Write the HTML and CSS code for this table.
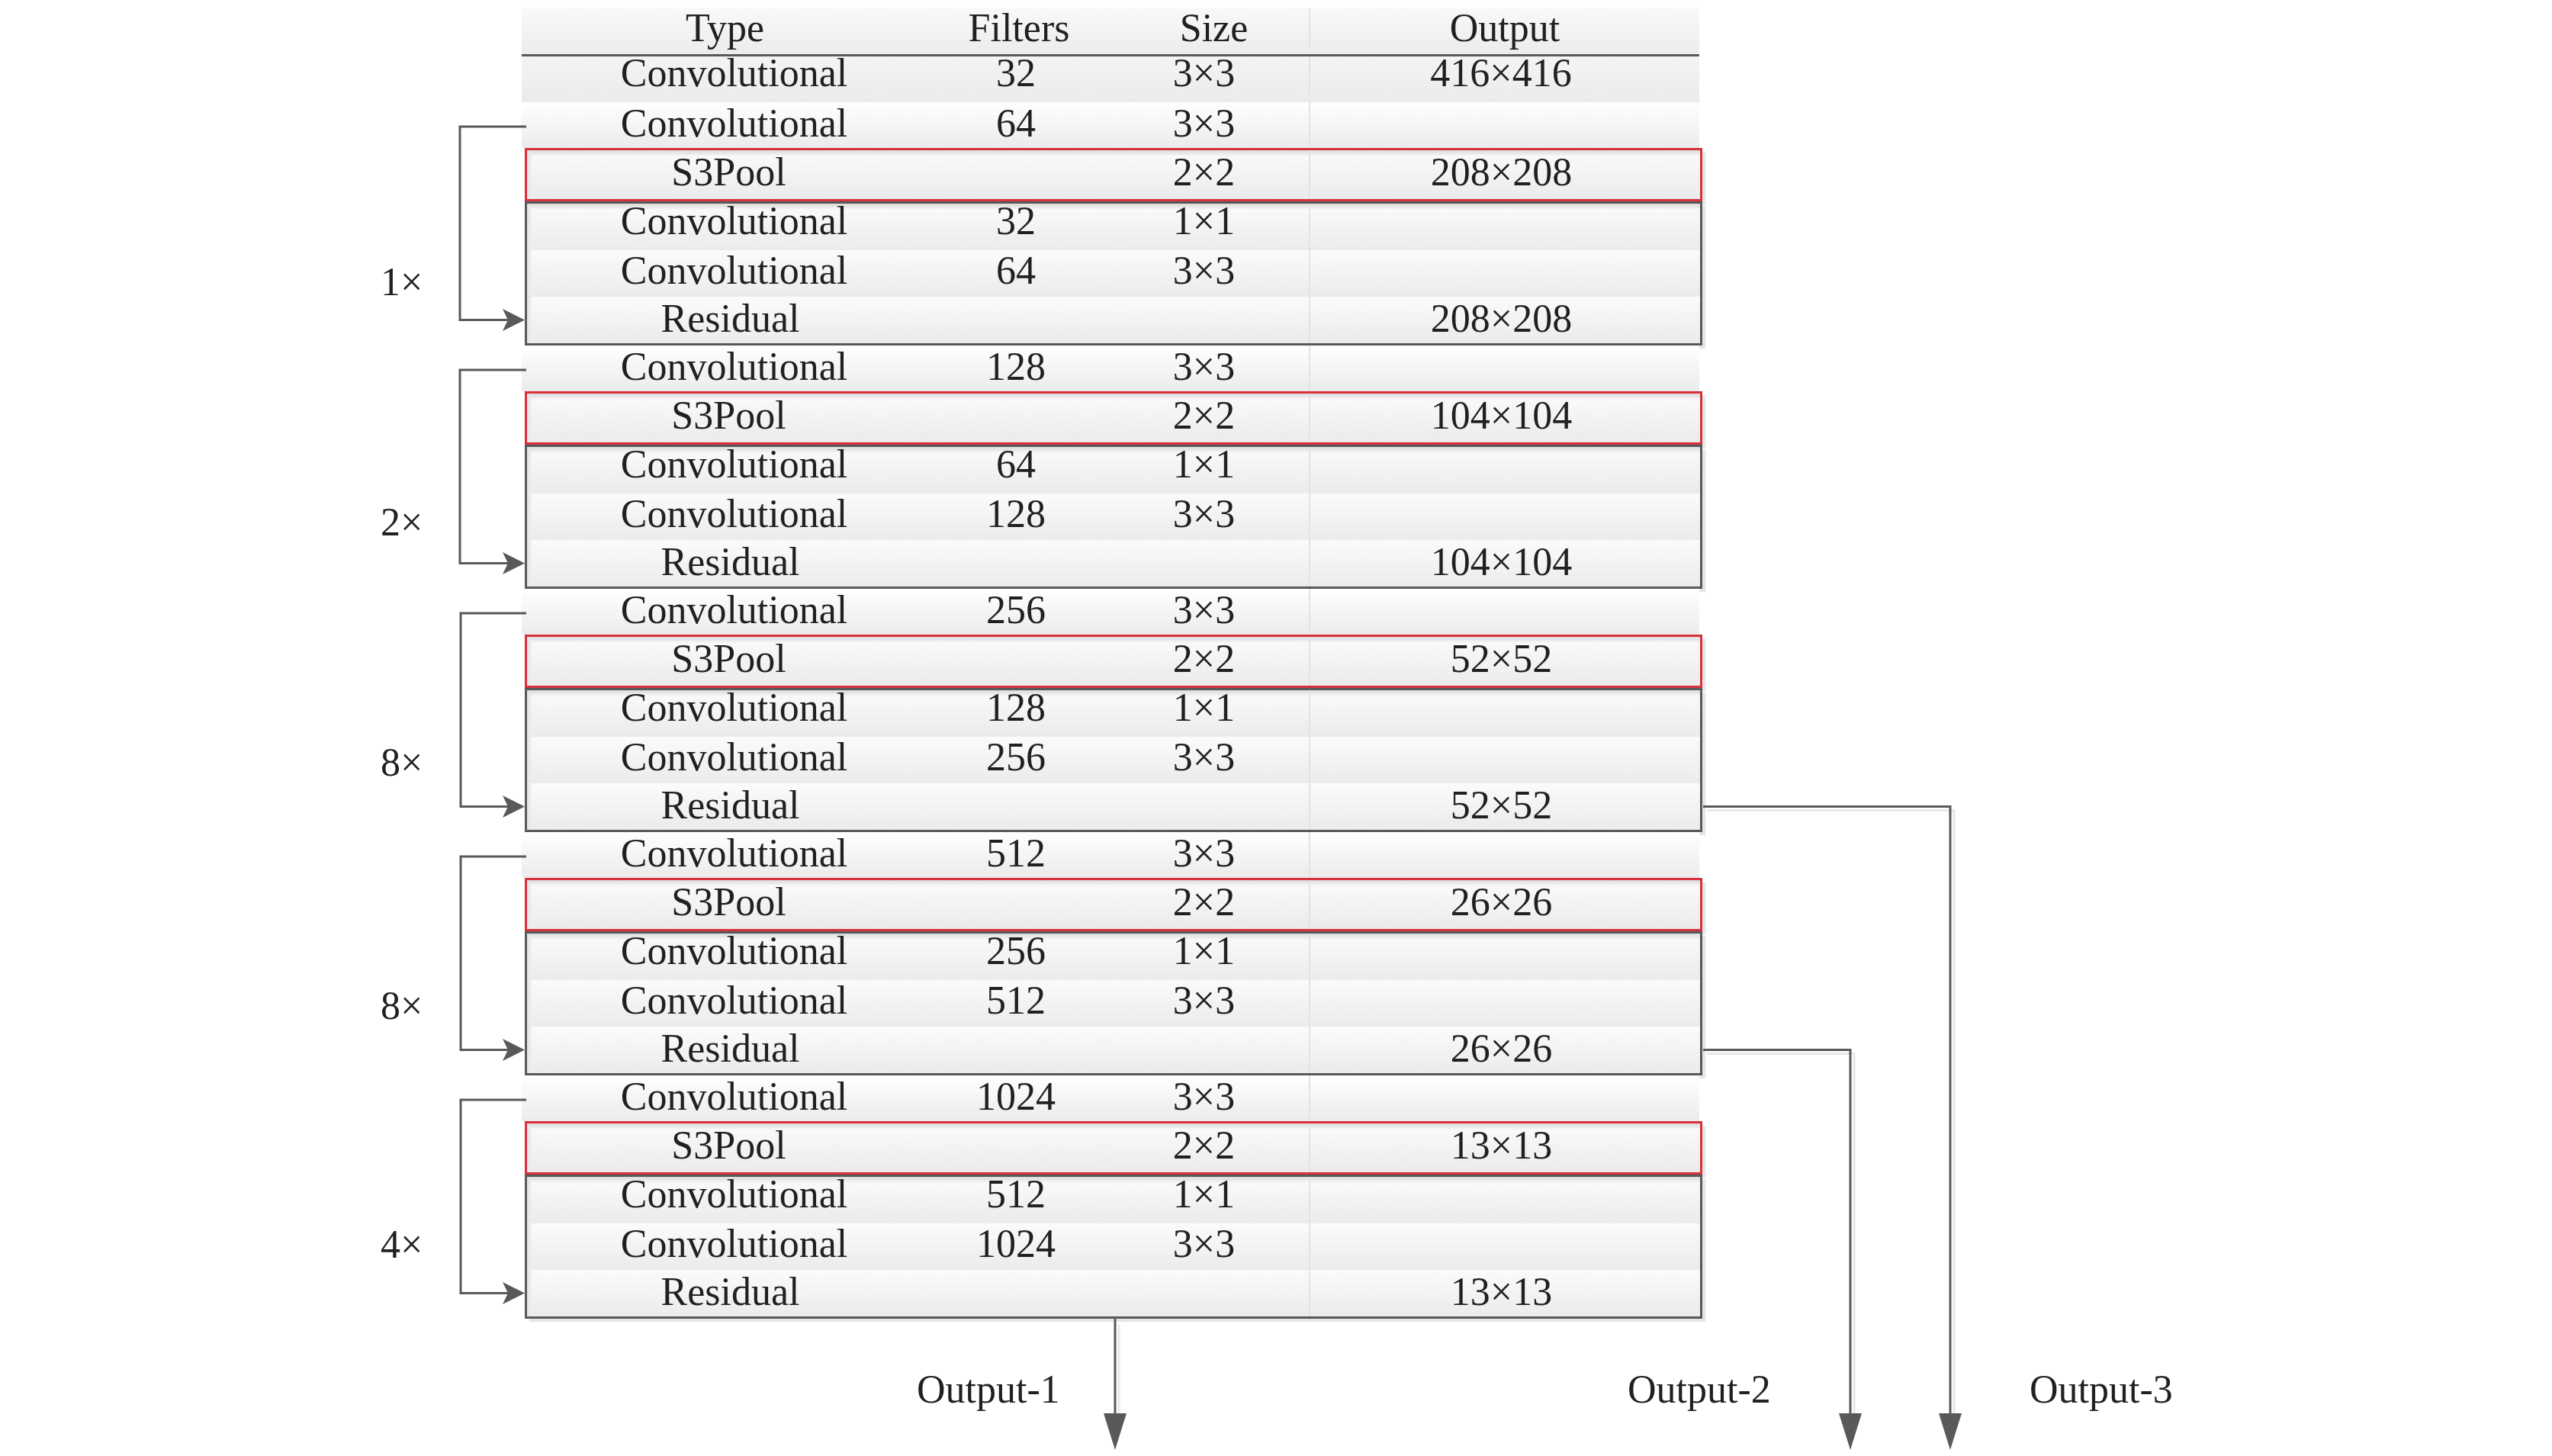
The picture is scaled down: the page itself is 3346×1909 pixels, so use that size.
FILE: index.html
```html
<!DOCTYPE html>
<html lang="en">
<head>
<meta charset="utf-8">
<title>Backbone with S3Pool</title>
<link rel="stylesheet" href="styles.css">
</head>
<body>
<div class="figure">
  <div class="lead">
    <div class="row head"><span class="cell type">Type</span><span class="cell fil">Filters</span><span class="cell siz">Size</span><span class="cell out">Output</span></div>
    <div class="row first"><span class="cell type conv">Convolutional</span><span class="cell fil">32</span><span class="cell siz">3×3</span><span class="cell out">416×416</span></div>
  </div>

  <div class="group">
    <div class="gutter">
      <span class="mult m1">1×</span>
      <svg class="bracket" width="700" height="319" viewBox="0 0 700 319"><path d="M690 32H603V285.5H667" /><polygon points="688,285.5 659,271 666,285.5 659,300" /></svg>
    </div>
    <div class="stack">
      <div class="row stride"><span class="cell type conv">Convolutional</span><span class="cell fil">64</span><span class="cell siz">3×3</span><span class="cell out"></span></div>
      <div class="box pool"><div class="row"><span class="cell type pl">S3Pool</span><span class="cell fil"></span><span class="cell siz">2×2</span><span class="cell out">208×208</span></div></div>
      <div class="box block">
        <div class="row"><span class="cell type conv">Convolutional</span><span class="cell fil">32</span><span class="cell siz">1×1</span><span class="cell out"></span></div>
        <div class="row"><span class="cell type conv">Convolutional</span><span class="cell fil">64</span><span class="cell siz">3×3</span><span class="cell out"></span></div>
        <div class="row"><span class="cell type">Residual</span><span class="cell fil"></span><span class="cell siz"></span><span class="cell out">208×208</span></div>
      </div>
    </div>
  </div>

  <div class="group">
    <div class="gutter">
      <span class="mult m2">2×</span>
      <svg class="bracket" width="700" height="319" viewBox="0 0 700 319"><path d="M690 32H603V285.5H667" /><polygon points="688,285.5 659,271 666,285.5 659,300" /></svg>
    </div>
    <div class="stack">
      <div class="row stride"><span class="cell type conv">Convolutional</span><span class="cell fil">128</span><span class="cell siz">3×3</span><span class="cell out"></span></div>
      <div class="box pool"><div class="row"><span class="cell type pl">S3Pool</span><span class="cell fil"></span><span class="cell siz">2×2</span><span class="cell out">104×104</span></div></div>
      <div class="box block">
        <div class="row"><span class="cell type conv">Convolutional</span><span class="cell fil">64</span><span class="cell siz">1×1</span><span class="cell out"></span></div>
        <div class="row"><span class="cell type conv">Convolutional</span><span class="cell fil">128</span><span class="cell siz">3×3</span><span class="cell out"></span></div>
        <div class="row"><span class="cell type">Residual</span><span class="cell fil"></span><span class="cell siz"></span><span class="cell out">104×104</span></div>
      </div>
    </div>
  </div>

  <div class="group">
    <div class="gutter">
      <span class="mult m3">8×</span>
      <svg class="bracket" width="700" height="319" viewBox="0 0 700 319"><path d="M690 32H604V285.5H667" /><polygon points="688,285.5 659,271 666,285.5 659,300" /></svg>
    </div>
    <div class="stack">
      <div class="row stride"><span class="cell type conv">Convolutional</span><span class="cell fil">256</span><span class="cell siz">3×3</span><span class="cell out"></span></div>
      <div class="box pool"><div class="row"><span class="cell type pl">S3Pool</span><span class="cell fil"></span><span class="cell siz">2×2</span><span class="cell out">52×52</span></div></div>
      <div class="box block">
        <div class="row"><span class="cell type conv">Convolutional</span><span class="cell fil">128</span><span class="cell siz">1×1</span><span class="cell out"></span></div>
        <div class="row"><span class="cell type conv">Convolutional</span><span class="cell fil">256</span><span class="cell siz">3×3</span><span class="cell out"></span></div>
        <div class="row"><span class="cell type">Residual</span><span class="cell fil"></span><span class="cell siz"></span><span class="cell out">52×52</span></div>
      </div>
    </div>
  </div>

  <div class="group">
    <div class="gutter">
      <span class="mult m4">8×</span>
      <svg class="bracket" width="700" height="319" viewBox="0 0 700 319"><path d="M690 32H604V285.5H667" /><polygon points="688,285.5 659,271 666,285.5 659,300" /></svg>
    </div>
    <div class="stack">
      <div class="row stride"><span class="cell type conv">Convolutional</span><span class="cell fil">512</span><span class="cell siz">3×3</span><span class="cell out"></span></div>
      <div class="box pool"><div class="row"><span class="cell type pl">S3Pool</span><span class="cell fil"></span><span class="cell siz">2×2</span><span class="cell out">26×26</span></div></div>
      <div class="box block">
        <div class="row"><span class="cell type conv">Convolutional</span><span class="cell fil">256</span><span class="cell siz">1×1</span><span class="cell out"></span></div>
        <div class="row"><span class="cell type conv">Convolutional</span><span class="cell fil">512</span><span class="cell siz">3×3</span><span class="cell out"></span></div>
        <div class="row"><span class="cell type">Residual</span><span class="cell fil"></span><span class="cell siz"></span><span class="cell out">26×26</span></div>
      </div>
    </div>
  </div>

  <div class="group">
    <div class="gutter">
      <span class="mult m5">4×</span>
      <svg class="bracket" width="700" height="319" viewBox="0 0 700 319"><path d="M690 32H604V285.5H667" /><polygon points="688,285.5 659,271 666,285.5 659,300" /></svg>
    </div>
    <div class="stack">
      <div class="row stride"><span class="cell type conv">Convolutional</span><span class="cell fil">1024</span><span class="cell siz">3×3</span><span class="cell out"></span></div>
      <div class="box pool"><div class="row"><span class="cell type pl">S3Pool</span><span class="cell fil"></span><span class="cell siz">2×2</span><span class="cell out">13×13</span></div></div>
      <div class="box block">
        <div class="row"><span class="cell type conv">Convolutional</span><span class="cell fil">512</span><span class="cell siz">1×1</span><span class="cell out"></span></div>
        <div class="row"><span class="cell type conv">Convolutional</span><span class="cell fil">1024</span><span class="cell siz">3×3</span><span class="cell out"></span></div>
        <div class="row"><span class="cell type">Residual</span><span class="cell fil"></span><span class="cell siz"></span><span class="cell out">13×13</span></div>
      </div>
    </div>
  </div>

  <div class="outputs">
    <span class="olabel o1">Output-1</span>
    <span class="olabel o2">Output-2</span>
    <span class="olabel o3">Output-3</span>
  </div>

  <svg class="connectors" width="3346" height="1909" viewBox="0 0 3346 1909">
    <g class="shade" transform="translate(5,5)">
      <path d="M2233 1057.5H2557V1852" />
      <path d="M2233 1376.5H2426V1852" />
      <path d="M1462 1731V1852" />
    </g>
    <g class="wire">
      <path d="M2233 1057.5H2557V1856" />
      <path d="M2233 1376.5H2426V1856" />
      <path d="M1462 1729V1856" />
    </g>
    <g class="head-fill">
      <polygon points="1447,1853 1477,1853 1462,1901" />
      <polygon points="2411,1853 2441,1853 2426,1901" />
      <polygon points="2542,1853 2572,1853 2557,1901" />
    </g>
  </svg>
</div>
</body>
</html>
```

FILE: styles.css
```css
html, body {
  margin: 0;
  padding: 0;
  background: #ffffff;
}

body {
  width: 3346px;
  height: 1909px;
  overflow: hidden;
  font-family: "Liberation Serif", "Times New Roman", serif;
  color: #231f20;
}

.figure {
  position: relative;
  padding-top: 10px;
}

.lead {
  margin-left: 684px;
  width: 1544px;
}

/* ---------- rows ---------- */

.row {
  display: grid;
  grid-template-columns: 523px 254px 255px 512px;
  box-sizing: border-box;
  font-size: 52px;
  line-height: 40px;
  background: linear-gradient(#fcfcfc, #ebebeb);
}

.cell {
  display: flex;
  align-items: center;
  justify-content: center;
  box-sizing: border-box;
  white-space: nowrap;
  padding-bottom: 6px;
}

.cell.type {
  padding-left: 24px;
}

.cell.type.conv {
  padding-left: 34px;
}

.cell.fil {
  padding-right: 4px;
}

.cell.siz {
  padding-right: 20px;
}

.cell.out {
  border-left: 2px solid #e3e3e3;
  padding-right: 10px;
}

.head {
  height: 64px;
  padding-bottom: 7px;
  border-bottom: 3px solid #58595b;
  background: linear-gradient(#f9f9f9, #ececec);
}

.head .cell {
  padding-bottom: 0;
}

.head .cell.type {
  padding-left: 10px;
}

.head .cell.fil {
  padding-right: 0;
  padding-left: 4px;
}

.head .cell.siz {
  padding-right: 0;
  padding-left: 6px;
}

.head .cell.out {
  padding-right: 0;
}

.first {
  height: 60px;
  padding-bottom: 12px;
  background: linear-gradient(#f4f4f4, #ebebeb);
}

.first .cell {
  padding-bottom: 4px;
}

/* ---------- groups ---------- */

.group {
  display: flex;
}

.gutter {
  position: relative;
  flex: none;
  width: 684px;
}

.mult {
  display: block;
  padding: 196px 0 0 499px;
  font-size: 52px;
  line-height: 60px;
}

.mult.m1 {
  padding-top: 206px;
}

.mult.m2 {
  padding-top: 202px;
}

.mult.m3 {
  padding-top: 198px;
}

.mult.m4 {
  padding-top: 198px;
}

.mult.m5 {
  padding-top: 192px;
}

.bracket {
  position: absolute;
  left: 0;
  top: 0;
  overflow: visible;
}

.bracket path {
  fill: none;
  stroke: #58595b;
  stroke-width: 3;
}

.bracket polygon {
  fill: #58595b;
}

.stack {
  flex: none;
  width: 1548px;
}

.stride {
  width: 1544px;
  height: 60px;
  background: linear-gradient(#ffffff, #ebebeb);
}

.stride .cell {
  padding-bottom: 4px;
}

.box {
  margin-left: 4px;
  width: 1544px;
  box-sizing: border-box;
  box-shadow: 5px 5px 1px -1px #e6e6e6;
}

.box .row {
  grid-template-columns: 516px 254px 255px 513px;
  background:
    linear-gradient(to right, #e2e2e2 0, #ececec 4px, rgba(236, 236, 236, 0) 7px),
    linear-gradient(#fbfbfb, #ebebeb);
}

.box .row:first-child {
  background:
    linear-gradient(#dcdcdc 0, #e8e8e8 4px, rgba(232, 232, 232, 0) 8px),
    linear-gradient(to right, #e2e2e2 0, #ececec 4px, rgba(236, 236, 236, 0) 7px),
    linear-gradient(#fbfbfb, #ebebeb);
}

.box .cell.type {
  padding-left: 17px;
}

.box .cell.type.conv {
  padding-left: 27px;
}

.box .cell.type.pl {
  padding-left: 13px;
}

.pool {
  height: 70px;
  border: 3px solid #d9313b;
}

.pool .row {
  height: 64px;
}

.block {
  height: 189px;
  border: 3px solid #58595b;
}

.block .row {
  height: 61px;
}

.block .row:nth-child(1) .cell {
  padding-bottom: 16px;
}

.block .row:nth-child(2) .cell {
  padding-bottom: 8px;
}

.block .row:nth-child(3) .cell {
  padding-bottom: 4px;
}

/* ---------- outputs ---------- */

.outputs {
  display: flex;
  margin-top: 63px;
  padding-left: 1202px;
  font-size: 52px;
  line-height: 60px;
}

.olabel {
  flex: none;
  white-space: nowrap;
}

.o1 {
  width: 932px;
}

.o2 {
  width: 527px;
}

.connectors {
  position: absolute;
  left: 0;
  top: 0;
  pointer-events: none;
}

.connectors .shade path {
  fill: none;
  stroke: #e8e8e8;
  stroke-width: 3;
}

.connectors .wire path {
  fill: none;
  stroke: #58595b;
  stroke-width: 3;
}

.connectors .head-fill polygon {
  fill: #58595b;
}
```
